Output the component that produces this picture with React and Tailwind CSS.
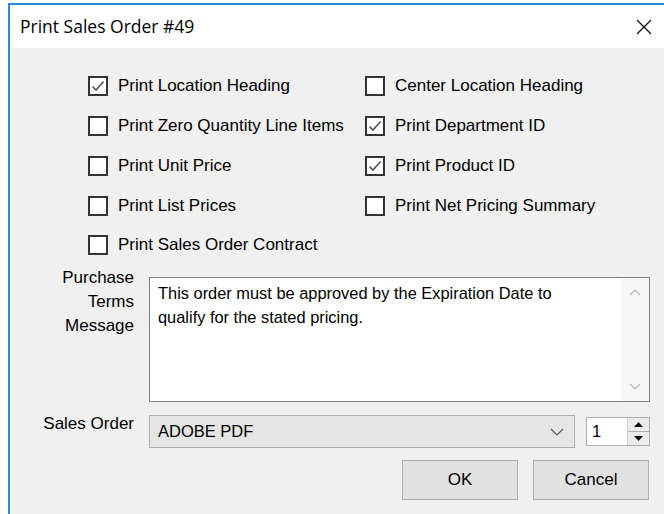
import React from 'react';

const CheckMark = () => (
  <svg width="14" height="14" viewBox="0 0 14 14" className="block">
    <path d="M1.5 7.5 L5 11 L12.5 2.5" fill="none" stroke="#555" strokeWidth="1.6" />
  </svg>
);

const Option = ({ label, checked }) => (
  <div className="flex items-center h-10 gap-[10px]">
    <div className="w-5 h-5 border-2 border-[#333] bg-white flex items-center justify-center">
      {checked && <CheckMark />}
    </div>
    <span className="text-[17px] text-black whitespace-nowrap">{label}</span>
  </div>
);

const App = () => {
  const left = [
    { label: 'Print Location Heading', checked: true },
    { label: 'Print Zero Quantity Line Items', checked: false },
    { label: 'Print Unit Price', checked: false },
    { label: 'Print List Prices', checked: false },
  ];
  const right = [
    { label: 'Center Location Heading', checked: false },
    { label: 'Print Department ID', checked: true },
    { label: 'Print Product ID', checked: true },
    { label: 'Print Net Pricing Summary', checked: false },
  ];

  return (
    <div
      className="w-[664px] h-[514px] bg-white pl-2 pt-[3px] overflow-hidden"
      style={{ fontFamily: '"Liberation Sans", Arial, sans-serif' }}
    >
      <div className="h-full flex flex-col border-l-2 border-t-2 border-[#2c87e0]">
        {/* Title bar */}
        <div className="h-[43px] bg-white flex items-center justify-between pl-[10px] pr-[12px]">
          <span
            className="text-[17.5px] text-black"
            style={{ fontFamily: '"Open Sans", "Noto Sans", sans-serif' }}
          >
            Print Sales Order #49
          </span>
          <svg width="16" height="16" viewBox="0 0 16 16">
            <path d="M1 1 L15 15 M15 1 L1 15" stroke="#111" strokeWidth="1.3" />
          </svg>
        </div>

        {/* Body */}
        <div className="flex-1 bg-[#f0f0f0] pt-[18px]">
          <div className="flex pl-[78px]">
            <div className="w-[277px] flex flex-col">
              {left.map((o) => (
                <Option key={o.label} {...o} />
              ))}
            </div>
            <div className="flex flex-col">
              {right.map((o) => (
                <Option key={o.label} {...o} />
              ))}
            </div>
          </div>
          <div className="pl-[78px] h-[37px] flex items-center">
            <div className="flex items-center gap-[10px]">
              <div className="w-5 h-5 border-2 border-[#333] bg-white" />
              <span className="text-[17px] text-black">Print Sales Order Contract</span>
            </div>
          </div>

          {/* Purchase terms */}
          <div className="flex items-start mt-[3px]">
            <div className="w-[124px] text-right text-[17px] leading-6 text-black">
              <div>Purchase</div>
              <div>Terms</div>
              <div>Message</div>
            </div>
            <div className="ml-[15px] mt-[11px] w-[501px] h-[125px] border border-[#828282] bg-white flex">
              <div className="flex-1 pl-[8px] pt-[3px] text-[16.4px] leading-6 text-black">
                This order must be approved by the Expiration Date to
                <br />
                qualify for the stated pricing.
              </div>
              <div className="w-[28px] flex flex-col items-center justify-between py-[10px] bg-[#f7f7f7]">
                <svg width="12" height="8" viewBox="0 0 12 8">
                  <path d="M1 7 L6 2 L11 7" fill="none" stroke="#b5b5b5" strokeWidth="1.2" />
                </svg>
                <svg width="12" height="8" viewBox="0 0 12 8">
                  <path d="M1 1 L6 6 L11 1" fill="none" stroke="#b5b5b5" strokeWidth="1.2" />
                </svg>
              </div>
            </div>
          </div>

          {/* Sales order printer */}
          <div className="flex items-start mt-[10px]">
            <div className="w-[124px] text-right text-[17px] leading-6 text-black">Sales Order</div>
            <div className="ml-[15px] mt-[3px] w-[426px] h-[33px] bg-[#e5e5e5] border border-[#adadad] flex items-center justify-between pl-[8px] pr-[10px]">
              <span className="text-[16.5px] text-black">ADOBE PDF</span>
              <svg width="14" height="8" viewBox="0 0 14 8">
                <path d="M1 1 L7 7 L13 1" fill="none" stroke="#555" strokeWidth="1.1" />
              </svg>
            </div>
            <div className="ml-[11px] mt-[5px] w-[64px] h-[29px] bg-white border border-[#adadad] flex">
              <div className="flex-1 pl-[5px] text-[16.5px] leading-[27px] text-black">1</div>
              <div className="w-[22px] flex flex-col border-l border-[#d0d0d0]">
                <div className="flex-1 bg-[#ececec] border-b border-[#adadad] flex items-center justify-center">
                  <svg width="9" height="5" viewBox="0 0 9 5">
                    <path d="M0 5 L4.5 0 L9 5 Z" fill="#111" />
                  </svg>
                </div>
                <div className="flex-1 bg-[#ececec] flex items-center justify-center">
                  <svg width="9" height="5" viewBox="0 0 9 5">
                    <path d="M0 0 L4.5 5 L9 0 Z" fill="#111" />
                  </svg>
                </div>
              </div>
            </div>
          </div>

          {/* Actions */}
          <div className="flex justify-end gap-[15px] pr-[15px] mt-[12px]">
            <button className="w-[116px] h-[40px] bg-[#e1e1e1] border border-[#adadad] text-[17px] text-black">
              OK
            </button>
            <button className="w-[116px] h-[40px] bg-[#e1e1e1] border border-[#adadad] text-[17px] text-black">
              Cancel
            </button>
          </div>
        </div>
      </div>
    </div>
  );
};

export default App;
